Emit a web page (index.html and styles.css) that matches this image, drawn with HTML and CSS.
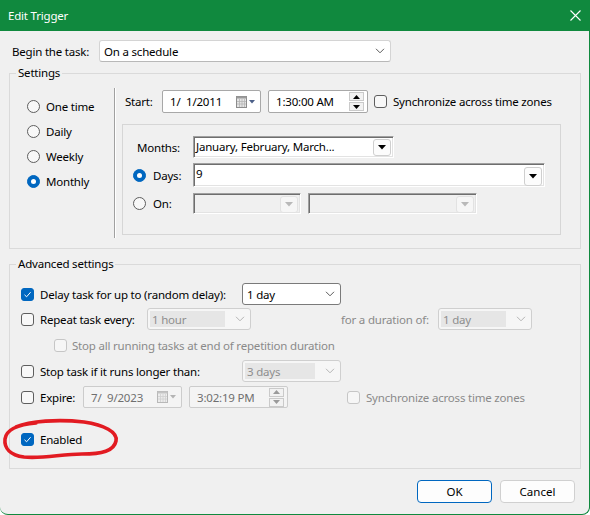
FILE: index.html
```html
<!DOCTYPE html>
<html lang="en">
<head>
    <meta charset="UTF-8">
    <title>Edit Trigger</title>
    <link rel="stylesheet" href="styles.css">
</head>
<body>
    <div class="window">
        <!-- Title bar -->
        <div class="titlebar">
            <span class="title">Edit Trigger</span>
            <svg class="close" width="11" height="11" viewBox="0 0 11 11">
                <path d="M0.5 0.5 L10.5 10.5 M10.5 0.5 L0.5 10.5" stroke="#fff" stroke-width="1.1"/>
            </svg>
        </div>

        <div class="content">
            <!-- Begin the task -->
            <div class="task-row">
                <span class="task-label">Begin the task:</span>
                <div class="combo combo-task">
                    <span>On a schedule</span>
                    <svg class="chev" width="10" height="6" viewBox="0 0 10 6"><path d="M1 0.8 L5 4.8 L9 0.8" fill="none" stroke="#5a5a5a" stroke-width="1"/></svg>
                </div>
            </div>

            <!-- Settings -->
            <fieldset class="group group-settings">
                <legend>Settings</legend>
                <div class="settings-body">
                    <div class="freq-list">
                        <div class="radio-item"><span class="radio"></span><span>One time</span></div>
                        <div class="radio-item"><span class="radio"></span><span>Daily</span></div>
                        <div class="radio-item"><span class="radio"></span><span>Weekly</span></div>
                        <div class="radio-item"><span class="radio checked"></span><span>Monthly</span></div>
                    </div>
                    <div class="separator"></div>
                    <div class="schedule">
                        <div class="start-row">
                            <span class="start-label">Start:</span>
                            <div class="datebox">
                                <span class="pre">1/  1/2011</span>
                                <svg class="cal" width="20" height="12" viewBox="0 0 20 12">
                                    <rect x="0.5" y="0.5" width="10" height="11" fill="#e4e4e4" stroke="#8c8c8c"/>
                                    <rect x="0.5" y="0.5" width="10" height="2" fill="#9a9a9a"/>
                                    <path d="M3.5 3 V11 M6 3 V11 M8.5 3 V11 M1 5.5 H10 M1 8 H10" stroke="#b4b4b4" stroke-width="0.8"/>
                                    <polygon points="13,4 19,4 16,7.5" fill="#4c6088"/>
                                </svg>
                            </div>
                            <div class="timebox">
                                <span>1:30:00 AM</span>
                                <div class="spin">
                                    <span class="spin-btn"><svg width="7" height="4" viewBox="0 0 7 4"><polygon points="0,4 7,4 3.5,0" fill="#000"/></svg></span>
                                    <span class="spin-btn"><svg width="7" height="4" viewBox="0 0 7 4"><polygon points="0,0 7,0 3.5,4" fill="#000"/></svg></span>
                                </div>
                            </div>
                            <span class="check"></span>
                            <span class="sync-label">Synchronize across time zones</span>
                        </div>

                        <div class="monthly-box">
                            <div class="month-row row-months">
                                <div class="month-label pad-months">Months:</div>
                                <div class="classic-combo w-months">
                                    <span>January, February, March...</span>
                                    <span class="drop-btn"><svg width="8" height="5" viewBox="0 0 8 5"><polygon points="0,0 8,0 4,4.5" fill="#000"/></svg></span>
                                </div>
                            </div>
                            <div class="month-row row-days">
                                <div class="month-label"><span class="radio checked"></span><span>Days:</span></div>
                                <div class="classic-combo w-days">
                                    <span>9</span>
                                    <span class="drop-btn"><svg width="8" height="5" viewBox="0 0 8 5"><polygon points="0,0 8,0 4,4.5" fill="#000"/></svg></span>
                                </div>
                            </div>
                            <div class="month-row row-on">
                                <div class="month-label"><span class="radio"></span><span>On:</span></div>
                                <div class="classic-combo disabled w-week">
                                    <span></span>
                                    <span class="drop-btn"><svg width="8" height="5" viewBox="0 0 8 5"><polygon points="0,0 8,0 4,4.5" fill="#b9b9b9"/></svg></span>
                                </div>
                                <div class="classic-combo disabled w-weekday">
                                    <span></span>
                                    <span class="drop-btn"><svg width="8" height="5" viewBox="0 0 8 5"><polygon points="0,0 8,0 4,4.5" fill="#b9b9b9"/></svg></span>
                                </div>
                            </div>
                        </div>
                    </div>
                </div>
            </fieldset>

            <!-- Advanced settings -->
            <fieldset class="group group-advanced">
                <legend>Advanced settings</legend>

                <div class="adv-row row-first">
                    <span class="check checked"><svg width="11" height="11" viewBox="0 0 11 11"><path d="M2.5 5.8 L4.6 7.8 L8.6 3.2" fill="none" stroke="#fff" stroke-width="1"/></svg></span>
                    <span class="opt-label w-long">Delay task for up to (random delay):</span>
                    <div class="combo combo-active w-delay">
                        <span>1 day</span>
                        <svg class="chev" width="10" height="6" viewBox="0 0 10 6"><path d="M1 0.8 L5 4.8 L9 0.8" fill="none" stroke="#5a5a5a" stroke-width="1"/></svg>
                    </div>
                </div>

                <div class="adv-row">
                    <span class="check"></span>
                    <span class="opt-label w-repeat">Repeat task every:</span>
                    <div class="combo disabled w-hour">
                        <span class="combo-value">1 hour</span>
                        <svg class="chev" width="10" height="6" viewBox="0 0 10 6"><path d="M1 0.8 L5 4.8 L9 0.8" fill="none" stroke="#b5b5b5" stroke-width="1"/></svg>
                    </div>
                    <span class="muted duration-label">for a duration of:</span>
                    <div class="combo disabled w-duration">
                        <span class="combo-value">1 day</span>
                        <svg class="chev" width="10" height="6" viewBox="0 0 10 6"><path d="M1 0.8 L5 4.8 L9 0.8" fill="none" stroke="#b5b5b5" stroke-width="1"/></svg>
                    </div>
                </div>

                <div class="adv-row row-indent">
                    <span class="check disabled"></span>
                    <span class="muted stop-all">Stop all running tasks at end of repetition duration</span>
                </div>

                <div class="adv-row">
                    <span class="check"></span>
                    <span class="opt-label w-long">Stop task if it runs longer than:</span>
                    <div class="combo disabled w-delay">
                        <span class="combo-value">3 days</span>
                        <svg class="chev" width="10" height="6" viewBox="0 0 10 6"><path d="M1 0.8 L5 4.8 L9 0.8" fill="none" stroke="#b5b5b5" stroke-width="1"/></svg>
                    </div>
                </div>

                <div class="adv-row">
                    <span class="check"></span>
                    <span class="opt-label w-expire">Expire:</span>
                    <div class="datebox disabled">
                        <span class="pre">7/  9/2023</span>
                        <svg class="cal" width="20" height="12" viewBox="0 0 20 12">
                            <rect x="0.5" y="0.5" width="10" height="11" fill="#ececec" stroke="#b8b8b8"/>
                            <rect x="0.5" y="0.5" width="10" height="2" fill="#c4c4c4"/>
                            <path d="M3.5 3 V11 M6 3 V11 M8.5 3 V11 M1 5.5 H10 M1 8 H10" stroke="#d0d0d0" stroke-width="0.8"/>
                            <polygon points="13,4 19,4 16,7.5" fill="#b4b4b4"/>
                        </svg>
                    </div>
                    <div class="timebox disabled">
                        <span>3:02:19 PM</span>
                        <div class="spin">
                            <span class="spin-btn"><svg width="7" height="4" viewBox="0 0 7 4"><polygon points="0,4 7,4 3.5,0" fill="#9a9a9a"/></svg></span>
                            <span class="spin-btn"><svg width="7" height="4" viewBox="0 0 7 4"><polygon points="0,0 7,0 3.5,4" fill="#9a9a9a"/></svg></span>
                        </div>
                    </div>
                    <span class="check disabled expire-sync"></span>
                    <span class="muted sync-label">Synchronize across time zones</span>
                </div>

                <div class="adv-row row-enabled">
                    <span class="check checked"><svg width="11" height="11" viewBox="0 0 11 11"><path d="M2.5 5.8 L4.6 7.8 L8.6 3.2" fill="none" stroke="#fff" stroke-width="1"/></svg></span>
                    <span class="opt-label">Enabled</span>
                </div>
            </fieldset>

            <!-- Dialog buttons -->
            <div class="buttons">
                <button class="btn btn-default">OK</button>
                <button class="btn">Cancel</button>
            </div>
        </div>

        <!-- Red hand-drawn mark around "Enabled" -->
        <svg class="annotation" width="125" height="55" viewBox="0 0 125 55">
            <path d="M16 17 C30 11, 58 9, 84 12 C104 15, 118 22, 116 31 C114 41, 102 44, 82 44 C62 44, 42 49, 24 47 C10 45, 4 38, 5 29 C6 21, 14 15, 36 13"
                  fill="none" stroke="#e21b22" stroke-width="3.6" stroke-linecap="round" stroke-linejoin="round"/>
        </svg>
    </div>
</body>
</html>
```

FILE: styles.css
```css
/* Dialog base */
* {
    box-sizing: border-box;
}

html, body {
    margin: 0;
    padding: 0;
    background: #ffffff;
}

body {
    font-family: "Noto Sans", "Segoe UI", sans-serif;
    font-size: 11.5px;
    letter-spacing: -0.2px;
    color: #000;
}

.window {
    position: relative;
    width: 590px;
    height: 515px;
    background: #f0f0f0;
    border-right: 1px solid #10893e;
    border-bottom: 1px solid #10893e;
    border-radius: 0 0 8px 8px;
    overflow: hidden;
}

.titlebar {
    height: 31px;
    background: #10893e;
    color: #fff;
    display: flex;
    align-items: center;
    justify-content: space-between;
    padding: 0 8px 0 8px;
}

.content {
    padding: 9px 8px 0 9px;
}

/* Begin the task */
.task-row {
    display: flex;
    align-items: center;
    height: 22px;
    padding-left: 3px;
}

.task-label {
    width: 87px;
}

/* Win11 style combo */
.combo {
    display: flex;
    align-items: center;
    justify-content: space-between;
    height: 22px;
    background: #fff;
    border: 1px solid #7a7a7a;
    border-radius: 3px;
    padding: 0 5px 0 4px;
}

.combo-task {
    width: 292px;
    border-color: #d4d4d4;
    border-bottom-color: #b8b8b8;
}

.combo.disabled {
    background: #f6f6f6;
    border-color: #cfcfcf;
    color: #8e8e8e;
    padding-left: 2px;
}

.combo-value {
    flex: 1;
    align-self: stretch;
    margin: 2px 10px 2px 0;
    padding-left: 2px;
    background: #e6e6e6;
    display: flex;
    align-items: center;
}

.w-delay { width: 99px; }
.w-hour { width: 104px; }
.w-duration { width: 94px; }

/* Group boxes */
.group {
    margin: 0;
    padding: 0;
    min-width: 0;
    border: 1px solid #dadada;
}

.group legend {
    margin-left: 6px;
    padding: 0 2px;
    line-height: 16px;
}

.group-settings {
    margin-top: 3px;
    height: 184px;
}

.group-advanced {
    margin-top: 7px;
    height: 213px;
}

.settings-body {
    display: flex;
    align-items: flex-start;
}

.freq-list {
    width: 104px;
    margin-top: 13px;
    padding-left: 17px;
}

.radio-item {
    display: flex;
    align-items: center;
    height: 25px;
    gap: 6px;
}

.radio {
    position: relative;
    flex: none;
    width: 13px;
    height: 13px;
    border: 1px solid #5e5e5e;
    border-radius: 50%;
    background: #f8f8f8;
}

.radio.checked {
    border-color: #0067c0;
    background: #0067c0;
}

.radio.checked::after {
    content: "";
    position: absolute;
    left: 3px;
    top: 3px;
    width: 5px;
    height: 5px;
    border-radius: 50%;
    background: #fff;
}

.separator {
    width: 2px;
    height: 150px;
    margin-top: 7px;
    border-left: 1px solid #a0a0a0;
    border-right: 1px solid #ffffff;
}

.schedule {
    flex: 1;
}

.start-row {
    display: flex;
    align-items: center;
    height: 23px;
    margin-top: 9px;
    padding-left: 9px;
}

.start-label {
    width: 37px;
}

.datebox,
.timebox {
    display: flex;
    align-items: center;
    justify-content: space-between;
    height: 23px;
    background: #fff;
    border: 1px solid #a8a8a8;
    border-radius: 2px;
    padding: 0 3px 0 7px;
}

.datebox {
    width: 99px;
    padding-right: 4px;
}

.timebox {
    width: 100px;
    margin-left: 7px;
    padding-right: 3px;
}

.datebox.disabled,
.timebox.disabled {
    background: #f4f4f4;
    border-color: #cccccc;
    color: #6f6f6f;
    height: 22px;
}

.timebox.disabled {
    width: 99px;
}

.pre {
    white-space: pre;
}

.spin {
    display: flex;
    flex-direction: column;
    gap: 1px;
}

.spin-btn {
    display: flex;
    align-items: center;
    justify-content: center;
    width: 15px;
    height: 9px;
    border: 1px solid #cacaca;
    background: #f2f2f2;
}

.check {
    position: relative;
    flex: none;
    display: flex;
    align-items: center;
    justify-content: center;
    width: 13px;
    height: 13px;
    border: 1px solid #5e5e5e;
    border-radius: 3px;
    background: #f8f8f8;
}

.check.checked {
    border-color: #0067c0;
    background: #0067c0;
}

.check.disabled {
    border-color: #c6c6c6;
    background: #f6f6f6;
}

.start-row .check {
    margin-left: 6px;
}

.sync-label {
    margin-left: 6px;
}

/* Monthly options */
.monthly-box {
    width: 439px;
    height: 111px;
    margin: 11px 0 0 6px;
    border: 1px solid #d6d6d6;
    padding-top: 11px;
}

.month-row {
    display: flex;
    align-items: center;
}

.row-months { height: 22px; }
.row-days { height: 24px; margin-top: 5px; }
.row-on { height: 21px; margin-top: 6px; }

.month-label {
    display: flex;
    align-items: center;
    gap: 7px;
    width: 70px;
    padding-left: 10px;
}

.pad-months {
    padding-left: 14px;
}

.classic-combo {
    display: flex;
    align-items: flex-start;
    justify-content: space-between;
    align-self: stretch;
    background: #fff;
    border: 1px solid;
    border-color: #a0a0a0 #ffffff #ffffff #a0a0a0;
    box-shadow: inset 1px 1px 0 #6e6e6e, inset -1px -1px 0 #e3e3e3;
    padding: 1px 2px 0 2px;
    line-height: 17px;
}

.classic-combo.disabled {
    background: #f0f0f0;
}

.w-months { width: 201px; }
.w-days { width: 352px; }
.w-week { width: 108px; }
.w-weekday { width: 169px; margin-left: 7px; }

.drop-btn {
    display: flex;
    align-items: center;
    justify-content: center;
    width: 18px;
    height: 17px;
    margin-top: 1px;
    border: 1px solid #cfcfcf;
    border-radius: 3px;
    background: #fcfcfc;
}

.w-days .drop-btn {
    height: 19px;
    margin-top: 2px;
}

.disabled .drop-btn {
    border-color: #e2e2e2;
    background: #f6f6f6;
}

/* Advanced rows */
.adv-row {
    display: flex;
    align-items: center;
    height: 26px;
    padding-left: 11px;
}

.row-first {
    height: 24px;
    margin-top: 10px;
}

.opt-label {
    margin-left: 6px;
}

.w-long { width: 202px; }
.w-repeat { width: 107px; }
.w-expire { width: 43px; }

.muted {
    color: #8a8a8a;
}

.duration-label {
    width: 97px;
    margin-left: 90px;
}

.row-indent {
    padding-left: 44px;
}

.stop-all {
    margin-left: 5px;
}

.expire-sync {
    margin-left: 59px;
}

.row-enabled {
    height: 24px;
    margin-top: 17px;
}

/* Buttons */
.buttons {
    display: flex;
    justify-content: flex-end;
    gap: 8px;
    margin-top: 11px;
    padding-right: 6px;
}

.btn {
    width: 75px;
    height: 23px;
    font: inherit;
    color: #000;
    background: #fdfdfd;
    border: 1px solid #d0d0d0;
    border-radius: 4px;
}

.btn-default {
    border-color: #0067c0;
}

.annotation {
    position: absolute;
    left: 0;
    top: 410px;
}
```
